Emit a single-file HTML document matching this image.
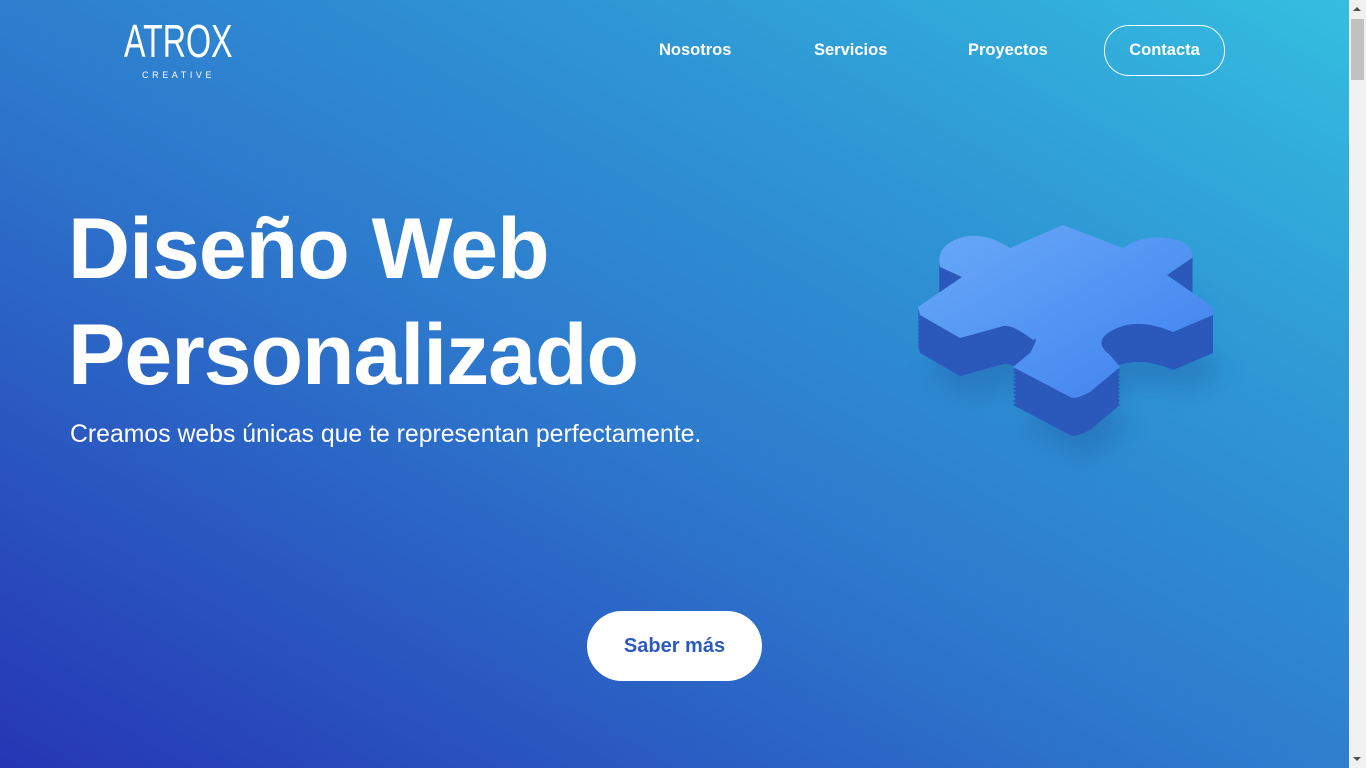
<!DOCTYPE html>
<html><head><meta charset="utf-8"><style>
*{margin:0;padding:0;box-sizing:border-box}
html,body{width:1366px;height:768px;overflow:hidden}
body{font-family:"Liberation Sans",sans-serif;position:relative;background:linear-gradient(30deg,#2636b4 0%,#2d79cd 45%,#2f9bd6 75%,#34bfe0 100%);color:#fff}
.sb{position:absolute;right:0;top:0;width:17px;height:768px;background:#f1f1f1}
.sb .th{position:absolute;left:2px;top:19px;width:13px;height:61px;background:#c1c1c1}
.sb .up{position:absolute;left:4px;top:7px;border-left:4px solid transparent;border-right:4px solid transparent;border-bottom:4px solid #505050}
.sb .dn{position:absolute;left:4px;bottom:7px;border-left:4px solid transparent;border-right:4px solid transparent;border-top:4px solid #505050}
.logo{position:absolute;left:124px;top:18px;width:112px}
.logo .t{font-size:46px;letter-spacing:0px;line-height:46px;transform:scaleX(0.7);transform-origin:left;white-space:nowrap}
.logo .c{position:absolute;left:18px;top:52px;font-size:9px;letter-spacing:3.6px}
nav a{position:absolute;top:41px;font-size:16.5px;font-weight:bold;color:#fff;text-decoration:none}
.ct{position:absolute;left:1104px;top:25px;width:121px;height:51px;border:1px solid #fff;border-radius:25px;font-size:16.5px;font-weight:bold;text-align:center;line-height:49px}
h1{position:absolute;left:68px;top:196px;font-size:86px;line-height:106px;font-weight:bold;letter-spacing:-1px}
p.s{position:absolute;left:70px;top:421px;font-size:24.8px}
.btn{position:absolute;left:587px;top:611px;width:175px;height:70px;background:#fff;border-radius:35px;color:#2b5bbf;font-size:20px;font-weight:bold;text-align:center;line-height:70px}
svg{position:absolute;left:0;top:0}
</style></head><body>
<div class="logo"><div class="t">ATROX</div><div class="c">CREATIVE</div></div>
<nav><a style="left:659px">Nosotros</a><a style="left:814px">Servicios</a><a style="left:968px">Proyectos</a></nav>
<div class="ct">Contacta</div>
<h1>Diseño Web<br>Personalizado</h1>
<p class="s">Creamos webs únicas que te representan perfectamente.</p>
<div class="btn">Saber más</div>
<svg width="1366" height="768">
<defs>
<path id="pz" d="M1040,250 L963,237 Q985,232 1010,248 L1063,225 L1123,248 Q1150,230 1183,242 Q1195,250 1192,258 L1167,275 L1213,307 L1213,315 L1173,332 Q1140,318 1117,328 Q1090,340 1110,355 L1120,367 L1090,392 Q1075,400 1070,397 L1013,367 L1030,353 Q1040,335 1033,340 Q1010,322 1000,327 L960,338 L920,315 L918,307 L962,277 L940,267 Q935,245 963,237 Z"/>
<linearGradient id="tg" x1="0" y1="0" x2="1" y2="1"><stop offset="0" stop-color="#6aaaf8"/><stop offset="1" stop-color="#3d80ee"/></linearGradient>
<filter id="bl"><feGaussianBlur stdDeviation="12"/></filter>
</defs>
<use href="#pz" transform="translate(10,60)" fill="#1a5aa0" opacity="0.35" filter="url(#bl)"/>
<g fill="#2b58bb">
<use href="#pz" transform="translate(0,38)"/><use href="#pz" transform="translate(0,34)"/><use href="#pz" transform="translate(0,30)"/><use href="#pz" transform="translate(0,26)"/><use href="#pz" transform="translate(0,22)"/><use href="#pz" transform="translate(0,18)"/><use href="#pz" transform="translate(0,14)"/><use href="#pz" transform="translate(0,10)"/><use href="#pz" transform="translate(0,6)"/><use href="#pz" transform="translate(0,3)"/>
</g>
<use href="#pz" fill="url(#tg)"/>
</svg>
<div class="sb"><div class="up"></div><div class="th"></div><div class="dn"></div></div>
</body></html>
